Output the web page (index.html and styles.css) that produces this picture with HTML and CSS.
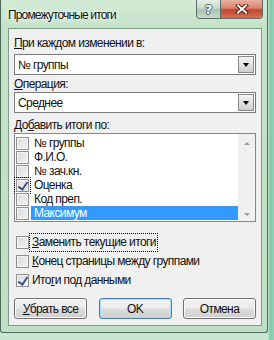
FILE: index.html
```html
<!DOCTYPE html>
<html lang="ru">
<head>
    <meta charset="UTF-8">
    <title>Промежуточные итоги</title>
    <link rel="stylesheet" href="styles.css">
</head>
<body>

    <div class="window">
        <div class="titlebar">
            <span class="title">Промежуточные итоги</span>
            <div class="caption-btns">
                <span class="cap help">?</span>
                <span class="cap close">
                    <svg width="14" height="10" viewBox="0 0 14 10">
                        <path d="M3 1.5 L11 8.5 M11 1.5 L3 8.5" stroke="#5a1e14" stroke-width="4" stroke-linecap="square"/>
                        <path d="M3 1.5 L11 8.5 M11 1.5 L3 8.5" stroke="#fff" stroke-width="2" stroke-linecap="square"/>
                    </svg>
                </span>
            </div>
        </div>

        <div class="client">
            <div class="field-label"><u>П</u>ри каждом изменении в:</div>
            <div class="combo">
                <span class="combo-text">№ группы</span>
                <span class="drop"></span>
            </div>

            <div class="field-label second"><u>О</u>перация:</div>
            <div class="combo">
                <span class="combo-text">Среднее</span>
                <span class="drop"></span>
            </div>

            <div class="field-label third">До<u>б</u>авить итоги по:</div>
            <div class="listbox">
                <div class="items">
                    <div class="item"><span class="check"></span><span class="item-text">№ группы</span></div>
                    <div class="item"><span class="check"></span><span class="item-text">Ф.И.О.</span></div>
                    <div class="item"><span class="check"></span><span class="item-text">№ зач.кн.</span></div>
                    <div class="item"><span class="check checked focus"></span><span class="item-text">Оценка</span></div>
                    <div class="item"><span class="check"></span><span class="item-text">Код преп.</span></div>
                    <div class="item"><span class="check"></span><span class="item-text selected">Максимум</span></div>
                </div>
                <div class="scrollbar">
                    <span class="arrow up"></span>
                    <span class="arrow down"></span>
                </div>
            </div>

            <div class="options">
                <div class="option"><span class="check"></span><span class="option-text focus"><u>З</u>аменить текущие итоги</span></div>
                <div class="option"><span class="check"></span><span class="option-text"><u>К</u>онец страницы между группами</span></div>
                <div class="option"><span class="check checked"></span><span class="option-text">Ито<u>г</u>и под данными</span></div>
            </div>

            <div class="buttons">
                <div class="btn"><u>У</u>брать все</div>
                <div class="btn default">OK</div>
                <div class="btn">Отмена</div>
            </div>
        </div>
    </div>

</body>
</html>
```

FILE: styles.css
```css
* {
    margin: 0;
    padding: 0;
    box-sizing: border-box;
}

body {
    width: 274px;
    height: 340px;
    overflow: hidden;
    background: linear-gradient(90deg, #c9e6d2 0, #c9e6d2 268px, #7fcaa9 270px, #8fd0b4 274px);
    font-family: "Liberation Sans", Arial, sans-serif;
    font-size: 12px;
    letter-spacing: -0.6px;
    color: #111;
}

u {
    text-decoration: underline;
    text-underline-offset: 1px;
}

.window {
    width: 268px;
    height: 333px;
    border: 1px solid #4d6b58;
    border-top: none;
    border-radius: 0 0 3px 3px;
    background: linear-gradient(180deg, #d3ebd6 0, #c4e2c8 30px, #bfe0c4 100%);
    display: flex;
    flex-direction: column;
}

.titlebar {
    height: 28px;
    display: flex;
    align-items: flex-start;
    justify-content: space-between;
    padding-left: 7px;
}

.title {
    font-size: 12px;
    letter-spacing: -0.85px;
    line-height: 14px;
    margin-top: 8px;
    text-shadow: 0 0 6px #fff, 0 0 3px #fff;
}

.caption-btns {
    display: flex;
    margin-right: 4px;
    border: 1px solid #5c6d64;
    border-top: none;
    border-radius: 0 0 4px 4px;
    overflow: hidden;
}

.cap {
    height: 18px;
    display: flex;
    align-items: center;
    justify-content: center;
}

.help {
    width: 24px;
    border-right: 1px solid #5c6d64;
    background: linear-gradient(180deg, #e4efe6 0, #c6d8cb 45%, #a9c2b1 55%, #c4dccb 100%);
    color: #fff;
    font-family: "DejaVu Sans", sans-serif;
    font-weight: bold;
    font-size: 13px;
    letter-spacing: 0;
    text-shadow: 1px 0 0 #4f5f57, -1px 0 0 #4f5f57, 0 1px 0 #4f5f57, 0 -1px 0 #4f5f57;
}

.close {
    width: 41px;
    background: linear-gradient(180deg, #eab0a2 0, #d98571 45%, #c2452b 55%, #d5705a 100%);
}

.client {
    margin: 0 5px 0 7px;
    background: #f0f0f0;
    border: 1px solid #7f9c89;
    padding: 7px 5px 6px 5px;
    display: flex;
    flex-direction: column;
}

.field-label {
    line-height: 14px;
    height: 14px;
    margin-bottom: 4px;
}

.field-label.second {
    margin-top: 2px;
    margin-bottom: 1px;
}

.field-label.third {
    margin-top: 5px;
    margin-bottom: 1px;
}

.combo {
    height: 21px;
    background: #fff;
    border: 1px solid #7a7a7a;
    display: flex;
    align-items: center;
    justify-content: space-between;
    padding: 0 1px 0 3px;
}

.combo-text {
    line-height: 14px;
}

.drop {
    width: 16px;
    height: 17px;
    border: 1px solid #8a8a8a;
    background: linear-gradient(180deg, #f4f4f4 0, #e2e2e2 50%, #cfcfcf 100%);
    position: relative;
}

.drop::after {
    content: "";
    position: absolute;
    left: 4px;
    top: 6px;
    border-left: 3.5px solid transparent;
    border-right: 3.5px solid transparent;
    border-top: 4px solid #000;
}

.listbox {
    height: 89px;
    background: #fff;
    border: 1px solid #828790;
    display: flex;
    padding-top: 2px;
}

.items {
    flex: 1;
    display: flex;
    flex-direction: column;
}

.item {
    height: 14px;
    display: flex;
    align-items: center;
    padding-left: 1px;
}

.item-text {
    line-height: 14px;
    height: 14px;
    padding-left: 3px;
    margin-left: 2px;
    flex: 1;
}

.item-text.selected {
    background: #3399ff;
    color: #fff;
}

.check {
    width: 13px;
    height: 13px;
    flex: none;
    border: 1px solid #8e8f8f;
    background: linear-gradient(135deg, #dcdcdc 0, #f2f2f2 100%);
    box-shadow: inset 0 0 0 1px #f4f4f4;
    position: relative;
}

.check.checked::after {
    content: "";
    position: absolute;
    left: 3px;
    top: 0;
    width: 4px;
    height: 8px;
    border-right: 2px solid #3a4f8c;
    border-bottom: 2px solid #3a4f8c;
    transform: rotate(35deg);
}

.check.focus {
    outline: 1px dotted #000;
    outline-offset: 1px;
}

.scrollbar {
    width: 17px;
    margin-top: -2px;
    background: #f0f0f0;
    display: flex;
    flex-direction: column;
    justify-content: space-between;
    align-items: center;
    padding: 8px 0 5px;
}

.arrow {
    width: 0;
    height: 0;
    border-left: 3.5px solid transparent;
    border-right: 3.5px solid transparent;
}

.arrow.up {
    border-bottom: 3px solid #9a9a9a;
}

.arrow.down {
    border-top: 3px solid #9a9a9a;
}

.options {
    margin-top: 11px;
    display: flex;
    flex-direction: column;
}

.option {
    height: 19px;
    display: flex;
    align-items: center;
    padding-left: 2px;
}

.option-text {
    line-height: 14px;
    padding: 1px 1px 2px 2px;
    margin-left: 1px;
}

.option-text.focus {
    outline: 1px dotted #000;
}

.buttons {
    margin-top: 8px;
    display: flex;
    justify-content: space-between;
}

.btn {
    width: 73px;
    height: 21px;
    border: 1px solid #707070;
    border-radius: 3px;
    background: linear-gradient(180deg, #f3f3f3 0, #ebebeb 48%, #dddddd 52%, #cfcfcf 100%);
    box-shadow: inset 0 0 0 1px #fbfbfb;
    display: flex;
    align-items: center;
    justify-content: center;
    line-height: 14px;
}

.btn.default {
    border-color: #3c7fb1;
    box-shadow: inset 0 0 0 1px #a9def5;
}
```
